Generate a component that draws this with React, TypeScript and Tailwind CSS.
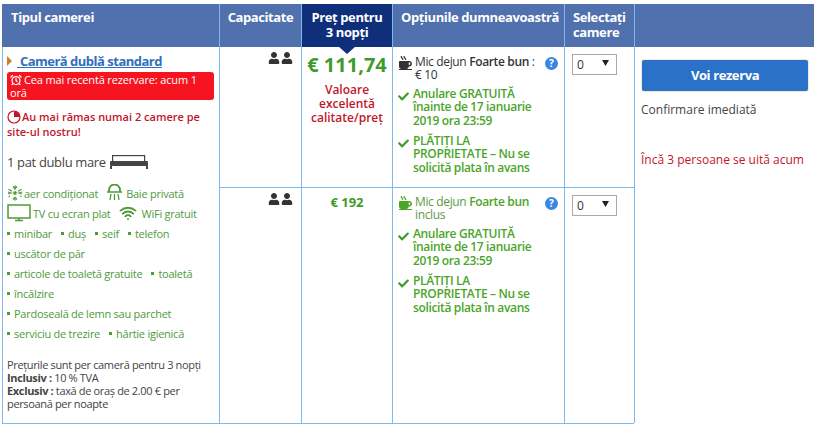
import type { ReactNode } from "react";
import { AlarmClock, Wifi } from "lucide-react";
import { FaCheck, FaMugHot, FaUser } from "react-icons/fa";

function Th({ children, className = "" }: { children: ReactNode; className?: string }) {
  return <div className={`bg-[#5071ad] border-r border-[#7db8ee] text-white font-bold text-[13px] tracking-[-0.4px] leading-[15px] pt-[6px] ${className}`}>{children}</div>;
}

function People() {
  return (
    <div className="flex justify-end gap-[1px] pr-[8px] pt-[5px] text-[#333]">
      <FaUser size={12} />
      <FaUser size={12} />
    </div>
  );
}

function Select() {
  return (
    <div className="mt-[7px] ml-[7px] w-[45px] h-[21px] border border-[#a9a9a9] bg-white flex items-center justify-between pl-[4px] pr-[7px] text-[12px] text-[#333]">
      <span>0</span>
      <svg width="7" height="6" viewBox="0 0 7 6" className="mb-[3px]"><path d="M0 0h7L3.500 6z" fill="#222" /></svg>
    </div>
  );
}

function Help() {
  return (
    <div className="w-[13px] h-[13px] rounded-full bg-[#3a87e0] text-white text-[10px] font-bold leading-[13px] text-center shrink-0">?</div>
  );
}

function Policy({ lines, className }: { lines: string[]; className: string }) {
  return (
    <div className={`flex pl-[5px] ${className}`}>
      <FaCheck size={11} className="text-[#3f9a2c] mt-[4px] shrink-0" />
      <div className="ml-[4px] text-[#4aa528] font-semibold text-[12px] tracking-[-0.35px] leading-[13.5px] whitespace-nowrap">
        {lines.map((l) => <div key={l}>{l}</div>)}
      </div>
    </div>
  );
}

function Options({ green }: { green?: boolean }) {
  return (
    <div className={`h-full relative ${green ? "pt-[7px]" : "pt-[8px]"}`}>
      <div className="flex pl-[6px]">
        <FaMugHot size={12} className={`${green ? "text-[#4aa528]" : "text-[#333]"} mt-[1px] shrink-0 border-b border-current w-[13px] h-[14px]`} />
        {green ? (
          <div className="ml-[3px] text-[12px] tracking-[-0.35px] leading-[13px] text-[#5c9a45]">
            <div>Mic dejun <span className="font-semibold text-[#4aa528]">Foarte bun</span></div>
            <div>inclus</div>
          </div>
        ) : (
          <div className="ml-[3px] text-[12px] tracking-[-0.35px] leading-[13px] text-[#333]">
            <div>Mic dejun <span className="font-semibold">Foarte bun</span> :</div>
            <div>€ 10</div>
          </div>
        )}
      </div>
      <div className={`absolute right-[6px] ${green ? "top-[9px]" : "top-[10px]"}`}><Help /></div>
      <Policy className="mt-[5.5px]" lines={["Anulare GRATUITĂ", "înainte de 17 ianuarie", "2019 ora 23:59"]} />
      <Policy className="mt-[6.5px]" lines={["PLĂTIȚI LA", "PROPRIETATE – Nu se", "solicită plata în avans"]} />
    </div>
  );
}

function Tag({ children }: { children: ReactNode }) {
  return (
    <span className="mr-[9px] inline-flex items-center gap-[4px]">
      <span className="w-[3px] h-[3px] bg-[#4a9e3a] inline-block" />
      {children}
    </span>
  );
}

function AmenityRow({ children }: { children: ReactNode }) {
  return <div className="h-[20px] leading-[20px] whitespace-nowrap">{children}</div>;
}

function SnowIcon() {
  return (
    <svg width="16" height="16" viewBox="0 0 16 16" fill="none" stroke="#4f9a3c" strokeWidth="1.300" className="-mt-[2px] mr-[1px] shrink-0">
      <path d="M8 0.500v15M1.500 4.200l13 7.600M14.500 4.200l-13 7.600" strokeDasharray="4 1.500 4" />
      <path d="M6 1.500l2 2 2-2M6 14.500l2-2 2 2M1 7l3 1-3 1M15 7l-3 1 3 1" />
    </svg>
  );
}

export default function App() {
  return (
    <div className="w-[814px] h-[424px] bg-white overflow-hidden pt-[4px] pl-[2px] font-['Open_Sans','Noto_Sans',sans-serif] text-[#333]">
      <div className="grid grid-cols-[218px_82px_91px_172px_70px_179px] grid-rows-[43px_141px_235px] border-b border-[#7db8ee] w-[632px]">
        <Th className="pl-[9px]">Tipul camerei</Th>
        <Th className="text-center">Capacitate</Th>
        <div className="bg-[#102f7b] border-r border-[#7db8ee] text-white font-bold text-[13px] tracking-[-0.4px] leading-[15px] pt-[6px] text-center relative">
          Preț pentru<br />3 nopți
          <div className="absolute left-[36px] top-[42px] w-0 h-0 border-l-[9px] border-r-[9px] border-t-[8px] border-l-transparent border-r-transparent border-t-[#102f7b]" />
        </div>
        <Th className="pl-[8px] whitespace-nowrap">Opțiunile dumneavoastră</Th>
        <Th className="pl-[8px]">Selectați<br />camere</Th>
        <div className="bg-[#5071ad]" />

        <div className="row-span-2 border-r border-l border-[#7db8ee] pl-[4px] pr-[5px] pt-[6px] text-[12px]">
          <div className="flex items-center">
            <svg width="5" height="10" viewBox="0 0 5 10"><path d="M0 0l5 5-5 5z" fill="#c9822b" /></svg>
            <span className="ml-[5px] text-[#2f6fbd] font-bold text-[13px] tracking-[-0.5px] leading-[16px] underline">&nbsp;Cameră dublă standard</span>
          </div>
          <div className="mt-[3px] bg-[#f5141f] rounded-[3px] text-white text-[11px] tracking-[-0.15px] leading-[13px] px-[3px] py-[1px] h-[28px]">
            <AlarmClock size={12} className="inline -mt-[3px] mr-[2px]" strokeWidth={2.500} />
            Cea mai recentă rezervare: acum 1 oră
          </div>
          <div className="mt-[9px] text-[#c1162c] font-semibold text-[11px] leading-[15px]">
            <svg width="14" height="14" viewBox="0 0 14 14" className="inline -mt-[2px] mr-[1px]">
              <circle cx="7" cy="7" r="6" fill="#fff" stroke="#c1162c" strokeWidth="1.200" />
              <path d="M7 7V1a6 6 0 0 1 6 6z" fill="#c1162c" />
            </svg>
            Au mai rămas numai 2 camere pe site-ul nostru!
          </div>
          <div className="mt-[14px] flex items-center text-[13px] tracking-[-0.35px] h-[20px] text-[#444]">
            1 pat dublu mare
            <svg width="40" height="15" viewBox="0 0 40 15" className="ml-[3px] -mt-[3px]" fill="#444">
              <rect x="3" y="1" width="33" height="1.200" />
              <rect x="3" y="1" width="1.200" height="7" />
              <rect x="35" y="1" width="1.200" height="7" />
              <rect x="1" y="7" width="38" height="5" rx="1" />
              <rect x="1" y="12" width="2" height="3" />
              <rect x="37" y="12" width="2" height="3" />
            </svg>
          </div>

          <div className="mt-[11px] text-[#4f9a3c] text-[11px] tracking-[-0.25px]">
            <div className="h-[20px] flex items-center whitespace-nowrap">
              <SnowIcon />
              <span>aer condiționat</span>
              <svg width="17" height="17" viewBox="0 0 17 17" className="ml-[8px] -mt-[4px] mr-[3px]" fill="none" stroke="#4f9a3c" strokeWidth="1.300">
                <path d="M3 8V6a5 5 0 0 1 11 0v2" strokeWidth="1.800" />
                <path d="M1 8h15M5 10l-1 6M8.500 10v6M12 10l1 6" />
              </svg>
              <span>Baie privată</span>
            </div>
            <div className="mt-[3px] h-[14px] flex items-center whitespace-nowrap">
              <svg width="24" height="18" viewBox="0 0 24 18" fill="none" stroke="#4f9a3c" strokeWidth="1.500" className="-mt-[3px] mr-[2px]">
                <rect x="1" y="1" width="22" height="13" />
                <path d="M8 16.500h8M12 14v2" />
              </svg>
              <span>TV cu ecran plat</span>
              <Wifi size={18} className="ml-[8px] -mt-[3px] mr-[3px]" strokeWidth={2.500} />
              <span className="ml-[2px]">WiFi gratuit</span>
            </div>
            <AmenityRow><Tag>minibar</Tag><Tag>duș</Tag><Tag>seif</Tag><Tag>telefon</Tag></AmenityRow>
            <AmenityRow><Tag>uscător de păr</Tag></AmenityRow>
            <AmenityRow><Tag>articole de toaletă gratuite</Tag><Tag>toaletă</Tag></AmenityRow>
            <AmenityRow><Tag>încălzire</Tag></AmenityRow>
            <AmenityRow><Tag>Pardoseală de lemn sau parchet</Tag></AmenityRow>
            <AmenityRow><Tag>serviciu de trezire</Tag><Tag>hârtie igienică</Tag></AmenityRow>
          </div>

          <div className="mt-[17px] text-[11px] tracking-[-0.35px] leading-[13px] text-[#444]">
            <div>Prețurile sunt per cameră pentru 3 nopți</div>
            <div><b>Inclusiv :</b> 10 % TVA</div>
            <div><b>Exclusiv :</b> taxă de oraș de 2.00 € per persoană per noapte</div>
          </div>
        </div>

        <div className="border-r border-b border-[#7db8ee]"><People /></div>
        <div className="border-r border-b border-[#7db8ee] text-center pt-[6px]">
          <div className="text-[#3f9a2c] font-bold text-[20px] leading-[24px] whitespace-nowrap">€ 111,74</div>
          <div className="mt-[6px] text-[#c1162c] font-semibold text-[12px] leading-[14px]">Valoare<br />excelentă<br />calitate/preț</div>
        </div>
        <div className="border-r border-b border-[#7db8ee]"><Options /></div>
        <div className="border-r border-b border-[#7db8ee]"><Select /></div>

        <div className="row-span-2 pl-[6px] pt-[13px]">
          <div className="ml-[1px] w-[166px] h-[31px] bg-[#2a72c9] rounded-[2px] text-white text-[13px] tracking-[-0.4px] font-bold flex items-center justify-center shadow-[0_0_0_1px_#f0e9dc]">Voi rezerva</div>
          <div className="mt-[10px] text-[12px] text-[#444]">Confirmare imediată</div>
          <div className="mt-[32px] text-[12px] text-[#c1162c] whitespace-nowrap">Încă 3 persoane se uită acum</div>
        </div>

        <div className="border-r border-[#7db8ee]"><People /></div>
        <div className="border-r border-[#7db8ee] text-center pt-[6px]">
          <div className="text-[#3f9a2c] font-bold text-[13px] leading-[16px]">€ 192</div>
        </div>
        <div className="border-r border-[#7db8ee]"><Options green /></div>
        <div className="border-r border-[#7db8ee]"><Select /></div>
      </div>
    </div>
  );
}
